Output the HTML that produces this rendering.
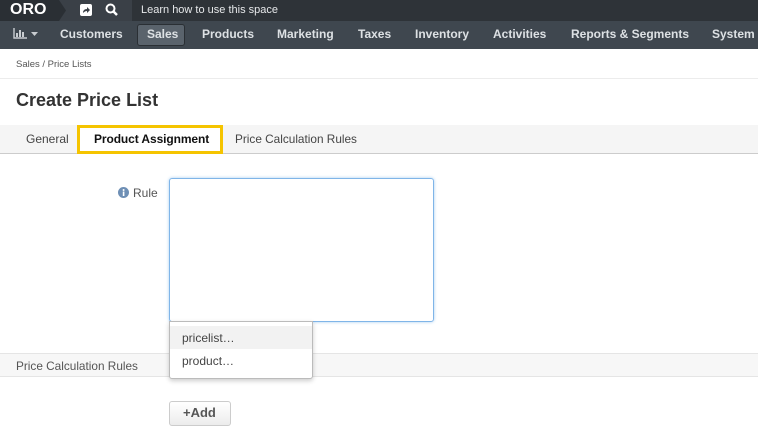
<!DOCTYPE html><html><head><style>
body{margin:0;width:758px;height:435px;overflow:hidden;font-family:"Liberation Sans",Arial,sans-serif;background:#fff;position:relative}
div,span{position:absolute;box-sizing:border-box}
</style></head><body>
<div style="left:0;top:0;width:758px;height:21px;background:#2e3338"></div>
<div style="left:0;top:0;width:132px;height:21px;background:#3a4047"></div>
<div style="left:0;top:0;width:58px;height:21px;background:#2a2f34"></div>
<svg style="position:absolute;left:56px;top:0" width="10" height="21"><polygon points="0,0 3,0 10,10.5 3,21 0,21" fill="#2a2f34"/></svg>
<span style="left:10px;top:1px;color:#fff;font-weight:bold;font-size:16px">ORO</span>
<svg style="position:absolute;left:80px;top:4px" width="12" height="12"><rect width="12" height="12" rx="2" fill="#fff"/><path d="M3 9 Q3 5 7 5 L7 3 L10 6 L7 9 L7 7 Q5 7 3 9Z" fill="#3a4047"/></svg>
<svg style="position:absolute;left:105px;top:3px" width="14" height="14"><circle cx="5.5" cy="5.5" r="4" stroke="#fff" stroke-width="2" fill="none"/><line x1="8.5" y1="8.5" x2="12" y2="12" stroke="#fff" stroke-width="2.5"/></svg>
<span style="left:141px;top:4px;color:#e6e8ea;font-size:11px">Learn how to use this space</span>
<div style="left:0;top:21px;width:758px;height:28px;background:#3f474f"></div>
<svg style="position:absolute;left:13px;top:28px" width="14" height="11"><path d="M1 0V10H14" stroke="#c8ccd0" fill="none" stroke-width="1.4"/><rect x="3" y="5" width="2" height="4" fill="#c8ccd0"/><rect x="6" y="2" width="2" height="7" fill="#c8ccd0"/><rect x="9" y="4" width="2" height="5" fill="#c8ccd0"/></svg>
<svg style="position:absolute;left:31px;top:32px" width="7" height="4"><polygon points="0,0 7,0 3.5,4" fill="#c8ccd0"/></svg>
<div style="left:137px;top:24px;width:48px;height:22px;background:#5a636c;border:1px solid #2a2f34;border-radius:3px"></div>
<div style="left:0;top:27px;font-size:12px;font-weight:bold;color:#dde1e4;white-space:nowrap">
<span style="left:60px">Customers</span><span style="left:147px">Sales</span><span style="left:202px">Products</span><span style="left:277px">Marketing</span><span style="left:358px">Taxes</span><span style="left:415px">Inventory</span><span style="left:493px">Activities</span><span style="left:571px">Reports&nbsp;&amp;&nbsp;Segments</span><span style="left:712px">System</span></div>
<span style="left:16px;top:59px;font-size:9.5px;color:#555">Sales / Price Lists</span>
<div style="left:0;top:78px;width:758px;height:1px;background:#ececec"></div>
<span style="left:16px;top:90px;font-size:18px;font-weight:bold;color:#333">Create Price List</span>
<div style="left:0;top:125px;width:758px;height:29px;background:#f5f5f5;border-bottom:1px solid #ccc"></div>
<span style="left:26px;top:132px;font-size:12px;color:#444">General</span>
<div style="left:77px;top:125px;width:146px;height:29px;border:3px solid #f5c400;background:#fff"></div>
<span style="left:94px;top:132px;font-size:12px;color:#111;font-weight:bold;letter-spacing:-0.1px">Product Assignment</span>
<span style="left:235px;top:132px;font-size:11.8px;color:#444">Price Calculation Rules</span>
<svg style="position:absolute;left:118px;top:187px" width="11" height="11"><circle cx="5.5" cy="5.5" r="5.5" fill="#6e8fb5"/><rect x="4.8" y="4.5" width="1.6" height="4.5" fill="#fff"/><circle cx="5.6" cy="3" r="1" fill="#fff"/></svg>
<span style="left:133px;top:186px;font-size:12px;color:#555">Rule</span>
<div style="left:169px;top:178px;width:265px;height:144px;border:1px solid #80b5e8;border-radius:3px;box-shadow:0 0 3px #a7cdf0"></div>
<div style="left:0;top:353px;width:758px;height:24px;background:#f7f7f7;border-top:1px solid #e5e5e5;border-bottom:1px solid #e5e5e5"></div>
<span style="left:16px;top:359px;font-size:11.8px;color:#555">Price Calculation Rules</span>
<div style="left:169px;top:321px;width:144px;height:58px;background:#fff;border:1px solid #bbb;border-radius:0 0 3px 3px;box-shadow:0 2px 5px rgba(0,0,0,.2)"></div>
<div style="left:170px;top:326px;width:142px;height:23px;background:#f2f2f2"></div>
<span style="left:182px;top:331px;font-size:12px;color:#444">pricelist…</span>
<span style="left:182px;top:354px;font-size:12px;color:#444">product…</span>
<div style="left:169px;top:401px;width:62px;height:25px;border:1px solid #ccc;border-radius:3px;background:linear-gradient(#fff,#ececec)"></div>
<span style="left:183px;top:405px;font-size:13px;font-weight:bold;color:#555">+Add</span>
</body></html>
